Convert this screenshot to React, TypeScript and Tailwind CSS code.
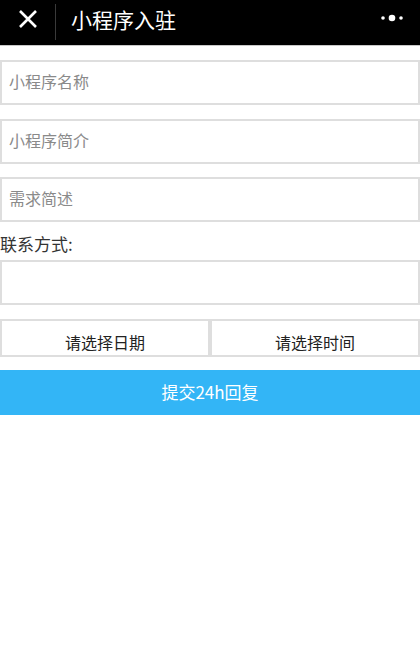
import React from "react";

const font = { fontFamily: '"Noto Sans CJK SC", "Noto Sans", sans-serif' };

function Field({ placeholder }: { placeholder?: string }) {
  return (
    <div className="h-[45px] w-[420px] border-2 border-[#dedede] bg-white flex items-center px-[7px] pb-[4px]">
      {placeholder ? (
        <span className="text-[16px] text-[#8a8a8a] leading-[20px]">{placeholder}</span>
      ) : null}
    </div>
  );
}

export default function App() {
  return (
    <div className="w-[420px] h-[663px] bg-white overflow-hidden" style={font}>
      <div className="h-[46px] bg-black border-b border-[#c8c8c8] flex items-center relative">
        <svg className="absolute left-[17px] top-[8px]" width="22" height="22" viewBox="0 0 22 22">
          <path d="M3 3 L19 19 M19 3 L3 19" stroke="white" strokeWidth="2.6" strokeLinecap="butt" />
        </svg>
        <div className="absolute left-[55px] top-[4px] h-[36px] w-px bg-[#3a3a3a]" />
        <span className="absolute left-[71px] top-[6px] text-white text-[21px] leading-[26px]">小程序入驻</span>
        <svg className="absolute left-[378px] top-[12px]" width="28" height="12" viewBox="0 0 28 12">
          <circle cx="5" cy="6" r="1.8" fill="white" />
          <circle cx="14" cy="6" r="3.3" fill="white" />
          <circle cx="23" cy="6" r="1.8" fill="white" />
        </svg>
      </div>
      <div className="mt-[14px]">
        <Field placeholder="小程序名称" />
      </div>
      <div className="mt-[14px]">
        <Field placeholder="小程序简介" />
      </div>
      <div className="mt-[13px]">
        <Field placeholder="需求简述" />
      </div>
      <div className="h-[38px] flex items-center pt-[5px]">
        <span className="text-[17px] text-[#333] leading-none">联系方式:</span>
      </div>
      <div>
        <Field />
      </div>
      <div className="mt-[14px] flex">
        <div className="w-[210px] h-[38px] border-2 border-[#dedede] flex justify-center pt-[10px]">
          <span className="text-[16px] text-[#222] leading-[22px]">请选择日期</span>
        </div>
        <div className="w-[210px] h-[38px] border-2 border-[#dedede] flex justify-center pt-[10px]">
          <span className="text-[16px] text-[#222] leading-[22px]">请选择时间</span>
        </div>
      </div>
      <div className="mt-[13px] h-[45px] bg-[#33b5f6] flex items-center justify-center pb-[2px]">
        <span className="text-[17px] text-white leading-none">提交24h回复</span>
      </div>
    </div>
  );
}
